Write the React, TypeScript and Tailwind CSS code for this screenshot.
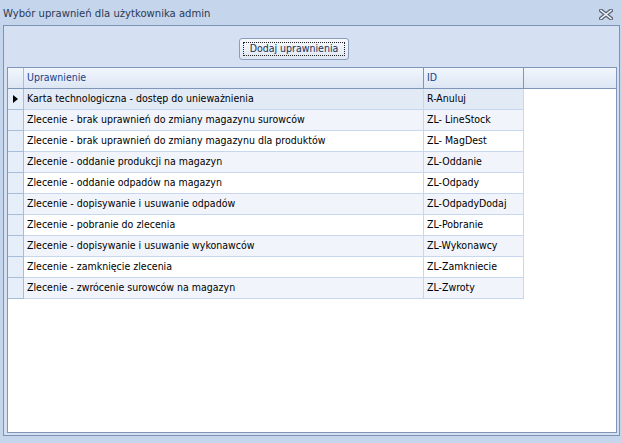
import React from 'react';

const rows = [
  { name: 'Karta technologiczna - dostęp do unieważnienia', id: 'R-Anuluj' },
  { name: 'Zlecenie - brak uprawnień do zmiany magazynu surowców', id: 'ZL- LineStock' },
  { name: 'Zlecenie - brak uprawnień do zmiany magazynu dla produktów', id: 'ZL- MagDest' },
  { name: 'Zlecenie - oddanie produkcji na magazyn', id: 'ZL-Oddanie' },
  { name: 'Zlecenie - oddanie odpadów na magazyn', id: 'ZL-Odpady' },
  { name: 'Zlecenie - dopisywanie i usuwanie odpadów', id: 'ZL-OdpadyDodaj' },
  { name: 'Zlecenie - pobranie do zlecenia', id: 'ZL-Pobranie' },
  { name: 'Zlecenie - dopisywanie i usuwanie wykonawców', id: 'ZL-Wykonawcy' },
  { name: 'Zlecenie - zamknięcie zlecenia', id: 'ZL-Zamkniecie' },
  { name: 'Zlecenie - zwrócenie surowców na magazyn', id: 'ZL-Zwroty' },
];

const CloseIcon = () => (
  <svg width="14" height="11" viewBox="0 0 14 11">
    <path d="M2 1.5 L12 9.5 M12 1.5 L2 9.5" stroke="#5a6478" strokeWidth="4" strokeLinecap="square" />
    <path d="M2 1.5 L12 9.5 M12 1.5 L2 9.5" stroke="#f4f6fa" strokeWidth="1.6" strokeLinecap="square" />
  </svg>
);

export default function App() {
  return (
    <div className="w-[621px] h-[443px] bg-[#c4d5ec] flex flex-col overflow-hidden text-[11px] font-['DejaVu_Sans_Condensed','DejaVu_Sans',sans-serif] [font-stretch:condensed]">
      {/* title bar */}
      <div className="h-[25px] flex items-center justify-between pl-[3px] pr-[8px] pt-[4px] text-[#2c3a52] text-[11.2px]">
        <span>Wybór uprawnień dla użytkownika admin</span>
        <CloseIcon />
      </div>

      {/* panel */}
      <div className="ml-[3px] w-[617px] h-[411px] border border-[#7d93b4] bg-[#d5e1f2] flex flex-col text-[10.5px]">
        <div className="pt-[12px] pl-[235px]">
          <button className="w-[110px] h-[22px] rounded-[3px] border border-[#8a9dbb] bg-gradient-to-b from-[#f7f9fd] to-[#dfe7f3] p-[3px] text-[#1d2f4f]">
            <div className="h-full border border-dotted border-[#222] flex items-center justify-center">
              Dodaj uprawnienia
            </div>
          </button>
        </div>

        {/* grid */}
        <div className="mt-[7px] ml-[3px] w-[610px] h-[366px] border border-[#7f96b8] bg-white flex flex-col">
          <div className="flex h-[21px] border-b border-[#7f96b8] bg-gradient-to-b from-[#f2f6fc] to-[#dce6f4] text-[#15428b]">
            <div className="w-[16px] border-r border-[#a9bcd8]" />
            <div className="w-[400px] border-r border-[#7f96b8] flex items-center pl-[3px]">Uprawnienie</div>
            <div className="w-[100px] border-r border-[#7f96b8] flex items-center pl-[3px]">ID</div>
            <div className="flex-1" />
          </div>
          {rows.map((r, i) => {
            const bg = i === 0 ? 'bg-[#e2eaf6]' : i % 2 === 1 ? 'bg-[#f1f5fb]' : 'bg-white';
            return (
              <div key={r.id} className="flex h-[21px]">
                <div className="w-[16px] border-r border-b border-[#a9bcd8] bg-[#e6eef9] flex items-center justify-center">
                  {i === 0 && (
                    <svg width="5" height="8" viewBox="0 0 5 8">
                      <path d="M0 0 L5 4 L0 8 Z" fill="#000" />
                    </svg>
                  )}
                </div>
                <div className={`w-[400px] border-r border-b border-[#c6d7ee] flex items-center pl-[3px] text-black ${bg}`}>{r.name}</div>
                <div className={`w-[100px] border-r border-b border-[#c6d7ee] flex items-center pl-[3px] text-black ${bg}`}>{r.id}</div>
              </div>
            );
          })}
        </div>
      </div>
    </div>
  );
}
